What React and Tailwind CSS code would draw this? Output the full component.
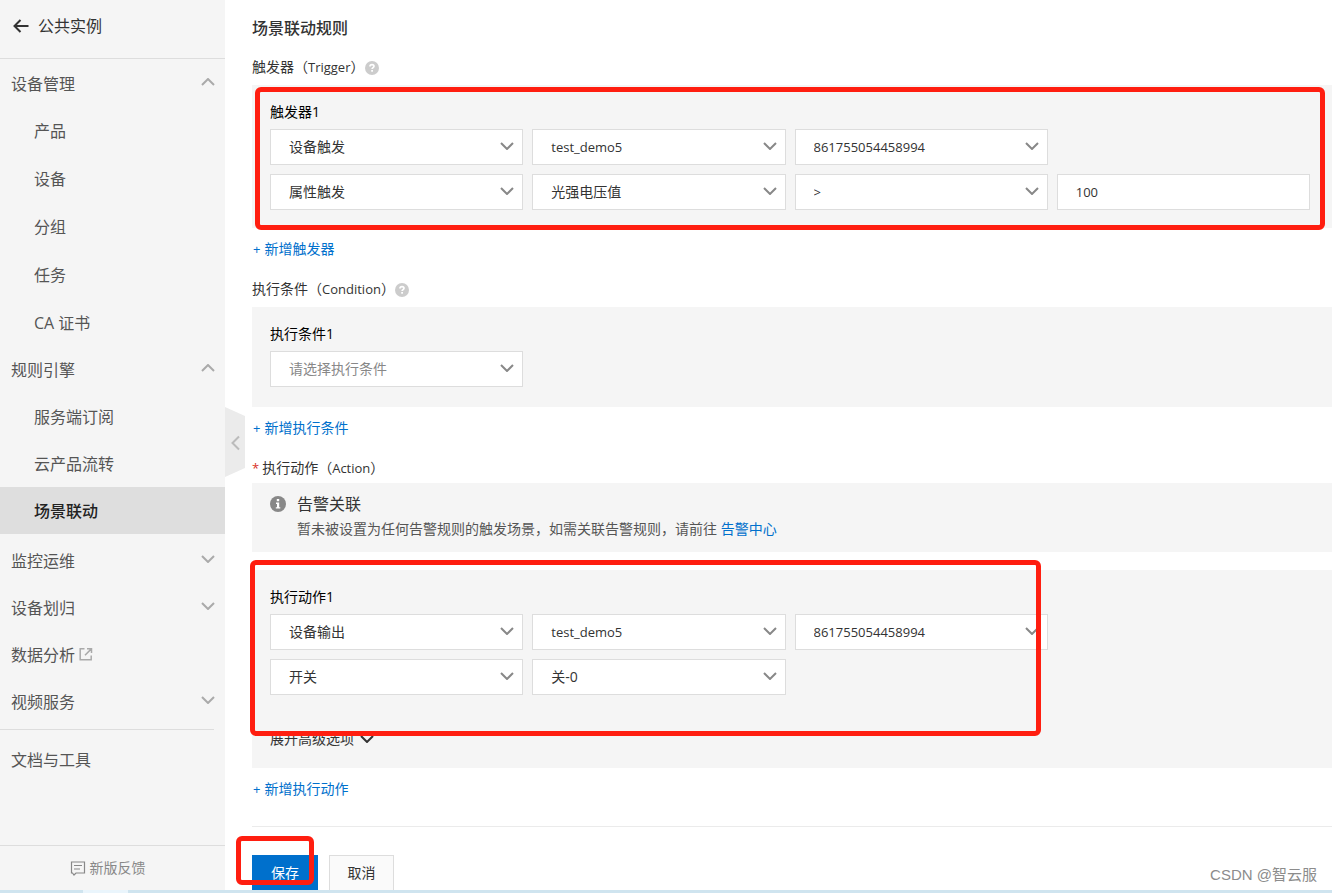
import React from "react";

function Chevron({ direction = "down", className = "" }) {
  const paths = {
    down: "M1 1l6 6 6-6",
    up: "M1 7l6-6 6 6",
  };
  return (
    <svg viewBox="0 0 14 8" className={`h-2 w-3.5 ${className}`} fill="none" stroke="currentColor" strokeWidth="2" aria-hidden="true">
      <path d={paths[direction]} />
    </svg>
  );
}

function HelpIcon() {
  return (
    <svg viewBox="0 0 14 14" className="mt-0.5 h-3.5 w-3.5" aria-hidden="true">
      <circle cx="7" cy="7" r="7" fill="#cccccc" />
      <path d="M5 5.600C5 4.200 5.900 3.600 7 3.600s2 .6 2 1.700c0 1.400-1.900 1.300-1.900 2.800" fill="none" stroke="#fff" strokeWidth="1.700" />
      <rect x="6.200" y="9" width="1.800" height="1.700" fill="#fff" />
    </svg>
  );
}

function InfoIcon() {
  return (
    <svg viewBox="0 0 16 16" className="h-4 w-4 shrink-0" aria-hidden="true">
      <circle cx="8" cy="8" r="8" fill="#888888" />
      <path d="M6.800 3h2.400v2.200H6.800zM6 6.500h3.200v4.700H10.300v1.400H5.800v-1.400h1.200V7.900H6z" fill="#fff" />
    </svg>
  );
}

function NavHeader({ children, direction }) {
  return (
    <button type="button" className="flex h-[47px] w-full items-center justify-between pl-[11px] pr-[10px] text-left">
      <span className="flex items-center gap-1">{children}</span>
      {direction && <Chevron direction={direction} className="mb-1 text-[#aaaaaa]" />}
    </button>
  );
}

function NavItem({ children, active }) {
  return (
    <li>
      <a
        href="#"
        className={`flex h-[47px] items-center pl-[34px] ${active ? "bg-[#dedede] font-medium text-[#222222]" : ""}`}
      >
        {children}
      </a>
    </li>
  );
}

function Sidebar() {
  return (
    <aside className="relative flex w-[225px] shrink-0 flex-col bg-[#f5f5f5] text-base text-[#555555]">
      <a href="#" className="flex h-[59px] shrink-0 items-center gap-[9px] border-b border-[#dddddd] pb-[6px] pl-[13px] text-[#333333]">
        <svg viewBox="0 0 16 14" className="h-3.5 w-4" fill="none" stroke="currentColor" strokeWidth="2" aria-hidden="true">
          <path d="M7.500 1L1.500 7l6 6M1.500 7H15.500" />
        </svg>
        公共实例
      </a>
      <nav className="pt-px">
        <NavHeader direction="up">设备管理</NavHeader>
        <ul className="flex flex-col gap-px">
          <NavItem>产品</NavItem>
          <NavItem>设备</NavItem>
          <NavItem>分组</NavItem>
          <NavItem>任务</NavItem>
          <NavItem>CA 证书</NavItem>
        </ul>
        <NavHeader direction="up">规则引擎</NavHeader>
        <ul className="pb-[3px]">
          <NavItem>服务端订阅</NavItem>
          <NavItem>云产品流转</NavItem>
          <NavItem active>场景联动</NavItem>
        </ul>
        <NavHeader direction="down">监控运维</NavHeader>
        <NavHeader direction="down">设备划归</NavHeader>
        <NavHeader>
          数据分析
          <svg viewBox="0 0 14 14" className="mb-0.5 h-3.5 w-3.5 text-[#aaaaaa]" fill="none" stroke="currentColor" strokeWidth="1.500" aria-hidden="true">
            <path d="M5.500 1.700H1.200v11h11V8.500M8 1.700h4.500V6M12.300 1.900L6 8.200" />
          </svg>
        </NavHeader>
        <NavHeader direction="down">视频服务</NavHeader>
        <div className="mr-[11px] mt-1 border-t border-[#dddddd] pt-[6px]">
          <NavHeader>文档与工具</NavHeader>
        </div>
      </nav>
      <button type="button" className="mt-auto flex h-[45px] shrink-0 items-center justify-center gap-1 border-t border-[#dddddd] pr-[10px] text-sm text-[#888888]">
        <svg viewBox="0 0 16 15" className="h-[15px] w-4" fill="none" stroke="currentColor" strokeWidth="1.200" aria-hidden="true">
          <path d="M1.500 1h13v11H6l-2 2-1.500-2h-1zM4 4.500h8M4 8h6" />
        </svg>
        新版反馈
      </button>
      <button type="button" aria-label="收起侧边栏" className="absolute left-full top-[407px] h-[70px] w-5">
        <svg viewBox="0 0 20 70" className="h-full w-full" aria-hidden="true">
          <path d="M0 0l20 9v52L0 70z" fill="#ebebeb" />
          <path d="M14 29.500L7.500 36l6.500 6.500" fill="none" stroke="#bbbbbb" strokeWidth="2" />
        </svg>
      </button>
    </aside>
  );
}

function SelectBox({ label, value, placeholder, latin }) {
  return (
    <div className="relative">
      <select
        aria-label={label}
        defaultValue={value}
        className={`h-9 w-full appearance-none border border-[#dddddd] bg-white pl-[18px] pr-9 ${latin ? "text-[13px]" : "text-sm"} ${placeholder ? "text-[#888888]" : "text-[#333333]"}`}
      >
        <option>{value}</option>
      </select>
      <Chevron className="pointer-events-none absolute right-[9px] top-[13px] text-[#888888]" />
    </div>
  );
}

function Panel({ title, className = "", children }) {
  return (
    <div className={`relative bg-[#f5f5f5] pl-[18px] pr-[22px] pt-[18px] ${className}`}>
      <h3 className="mb-2 leading-[18px] text-black">{title}</h3>
      {children}
    </div>
  );
}

function Fields({ children }) {
  return <div className="grid grid-cols-4 gap-[9px]">{children}</div>;
}

function SectionLabel({ name, english, help, required, className = "mb-[7px]" }) {
  return (
    <h2 className={`flex h-[22px] items-center ${className}`}>
      {required && <span className="mr-[3px] text-[13px] text-[#d93026]">*</span>}
      <span>
        {name}（<span className="text-[13px]">{english}</span>）
      </span>
      {help && <HelpIcon />}
    </h2>
  );
}

function AddLink({ children }) {
  return (
    <a href="#" className="mt-[10px] flex h-[22px] w-fit items-center gap-1 pl-px text-[#0070cc]">
      <span className="text-[13px]">+</span>
      {children}
    </a>
  );
}

function Highlight({ className }) {
  return <div aria-hidden="true" className={`pointer-events-none absolute rounded-md border-[5px] border-[#ff1e10] ${className}`} />;
}

export default function App() {
  return (
    <div className="relative flex h-screen flex-col overflow-hidden bg-white font-['Open_Sans','Noto_Sans_CJK_SC',sans-serif] text-sm text-[#333333]">
      <div className="flex min-h-0 flex-1">
        <Sidebar />
        <main className="min-w-0 flex-1 pl-[27px]">
          <h1 className="flex h-14 items-center text-base font-medium">场景联动规则</h1>

          <section>
            <SectionLabel name="触发器" english="Trigger" help />
            <Panel title="触发器1" className="pb-[18px]">
              <Fields>
                <SelectBox label="触发类型" value="设备触发" />
                <SelectBox label="产品" value="test_demo5" latin />
                <div className="col-span-2 grid grid-cols-2 gap-[9px]">
                  <SelectBox label="设备" value="861755054458994" latin />
                </div>
                <SelectBox label="触发方式" value="属性触发" />
                <SelectBox label="属性" value="光强电压值" />
                <SelectBox label="比较" value=">" latin />
                <input
                  aria-label="比较值"
                  defaultValue="100"
                  className="h-9 w-full border border-[#dddddd] bg-white px-[18px] text-[13px]"
                />
              </Fields>
              <Highlight className="-bottom-0.5 left-[3px] right-[7px] top-0.5" />
            </Panel>
            <AddLink>新增触发器</AddLink>
          </section>

          <section className="mt-[18px]">
            <SectionLabel name="执行条件" english="Condition" help />
            <Panel title="执行条件1" className="pb-5">
              <Fields>
                <SelectBox label="执行条件" value="请选择执行条件" placeholder />
              </Fields>
            </Panel>
            <AddLink>新增执行条件</AddLink>
          </section>

          <section className="mt-[18px]">
            <SectionLabel name="执行动作" english="Action" required className="mb-1" />
            <div className="mb-[18px] flex gap-[11px] bg-[#f5f5f5] pb-[11px] pl-[18px] pt-[9px]">
              <div className="pt-1">
                <InfoIcon />
              </div>
              <div>
                <h3 className="text-base leading-6">告警关联</h3>
                <p className="leading-[25px] text-[#555555]">
                  暂未被设置为任何告警规则的触发场景，如需关联告警规则，请前往{" "}
                  <a href="#" className="text-[#0070cc]">告警中心</a>
                </p>
              </div>
            </div>
            <Panel title="执行动作1" className="pb-[18px]">
              <Fields>
                <SelectBox label="动作类型" value="设备输出" />
                <SelectBox label="产品" value="test_demo5" latin />
                <div className="col-span-2 grid grid-cols-2 gap-[9px]">
                  <SelectBox label="设备" value="861755054458994" latin />
                </div>
                <SelectBox label="功能" value="开关" />
                <SelectBox label="功能值" value="关-0" />
              </Fields>
              <button type="button" className="mt-[33px] flex h-[22px] items-center gap-[6px]">
                展开高级选项
                <Chevron />
              </button>
              <Highlight className="-left-0.5 -top-[10px] h-[176px] w-[791px]" />
            </Panel>
            <AddLink>新增执行动作</AddLink>
          </section>

          <footer className="relative mt-[26px] flex gap-[11px] border-t border-[#ebebeb] pt-7">
            <button type="button" className="h-9 w-[66px] bg-[#0070cc] text-white">保存</button>
            <button type="button" className="h-9 w-[65px] border border-[#dddddd] bg-[#fafafa]">取消</button>
            <Highlight className="-left-4 top-[9px] h-[49px] w-[78px]" />
          </footer>
        </main>
      </div>
      <div className="relative z-10 flex h-[3px] shrink-0 bg-[#cfe4ef]">
        <div className="ml-[83px] w-[45px] bg-[#eaf5fc]" />
      </div>
      <div className="absolute bottom-2 right-[15px] font-['Liberation_Sans','Noto_Sans_CJK_SC',sans-serif] text-[15px] leading-5 text-[#8c8c8c]">CSDN @智云服</div>
    </div>
  );
}
